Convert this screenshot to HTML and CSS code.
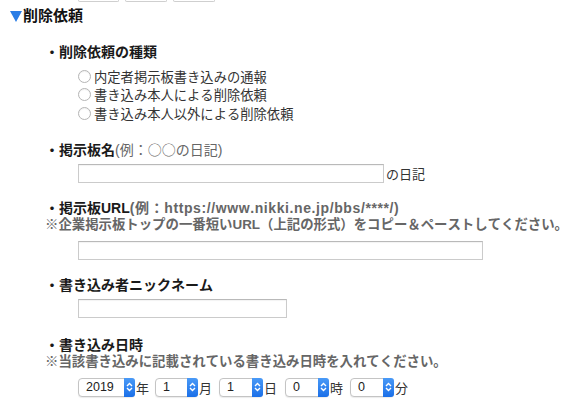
FILE: index.html
```html
<!DOCTYPE html>
<html lang="ja">
<head>
<meta charset="utf-8">
<link rel="stylesheet" href="styles.css">
</head>
<body>
<div class="tabs"><span class="tab t1"></span><span class="tab t2"></span><span class="tab t3"></span></div>
<h2 class="section-title"><svg class="tri" width="12" height="11" viewBox="0 0 12 11"><polygon points="0,0 12,0 6,11" fill="#2a7de6"/></svg>削除依頼</h2>
<ul class="form-list">
  <li class="item">
    <div class="label">・削除依頼の種類</div>
    <div class="radios">
      <label class="radio-row"><span class="radio"></span>内定者掲示板書き込みの通報</label>
      <label class="radio-row"><span class="radio"></span>書き込み本人による削除依頼</label>
      <label class="radio-row"><span class="radio"></span>書き込み本人以外による削除依頼</label>
    </div>
  </li>
  <li class="item">
    <div class="label">・掲示板名<span class="hint">(例：<span class="cjk">○○</span>の日記)</span></div>
    <div class="control"><span class="input w-name"></span><span class="suffix">の日記</span></div>
  </li>
  <li class="item">
    <div class="label">・掲示板URL<span class="hint b">(例：https://www.nikki.ne.jp/bbs/****/)</span></div>
    <div class="note">※企業掲示板トップの一番短いURL（上記の形式）をコピー＆ペーストしてください。</div>
    <div class="control"><span class="input w-url"></span></div>
  </li>
  <li class="item loose">
    <div class="label">・書き込み者ニックネーム</div>
    <div class="control"><span class="input w-nick"></span></div>
  </li>
  <li class="item">
    <div class="label">・書き込み日時</div>
    <div class="note">※当該書き込みに記載されている書き込み日時を入れてください。</div>
    <div class="control dates">
      <span class="sel w-year"><span class="val">2019</span><span class="step"><svg width="7" height="10" viewBox="0 0 7 10"><path d="M1 4 L3.5 1.5 L6 4 M1 6 L3.5 8.5 L6 6" fill="none" stroke="#fff" stroke-width="1.4"/></svg></span></span><span class="unit">年</span>
      <span class="sel w-month"><span class="val">1</span><span class="step"><svg width="7" height="10" viewBox="0 0 7 10"><path d="M1 4 L3.5 1.5 L6 4 M1 6 L3.5 8.5 L6 6" fill="none" stroke="#fff" stroke-width="1.4"/></svg></span></span><span class="unit">月</span>
      <span class="sel w-day"><span class="val">1</span><span class="step"><svg width="7" height="10" viewBox="0 0 7 10"><path d="M1 4 L3.5 1.5 L6 4 M1 6 L3.5 8.5 L6 6" fill="none" stroke="#fff" stroke-width="1.4"/></svg></span></span><span class="unit">日</span>
      <span class="sel w-hour"><span class="val">0</span><span class="step"><svg width="7" height="10" viewBox="0 0 7 10"><path d="M1 4 L3.5 1.5 L6 4 M1 6 L3.5 8.5 L6 6" fill="none" stroke="#fff" stroke-width="1.4"/></svg></span></span><span class="unit">時</span>
      <span class="sel w-min"><span class="val">0</span><span class="step"><svg width="7" height="10" viewBox="0 0 7 10"><path d="M1 4 L3.5 1.5 L6 4 M1 6 L3.5 8.5 L6 6" fill="none" stroke="#fff" stroke-width="1.4"/></svg></span></span><span class="unit">分</span>
    </div>
  </li>
</ul>
</body>
</html>
```
FILE: styles.css
```css
html, body {
  margin: 0;
  padding: 0;
  background: #fff;
}
body {
  font-family: "Liberation Sans", "Noto Sans CJK JP", sans-serif;
  font-kerning: none;
  color: #222;
  overflow: hidden;
}
.cjk {
  font-family: "Noto Sans CJK JP", sans-serif;
}
.tabs {
  display: flex;
  height: 2px;
  padding-left: 78px;
  gap: 6px;
}
.tab {
  display: block;
  height: 1px;
  border: 1px solid #cfcfcf;
  border-top: none;
  border-radius: 0 0 3px 3px;
}
.t1 { width: 39px; }
.t2 { width: 40px; }
.t3 { width: 40px; }
.section-title {
  margin: 4px 0 0 10px;
  font-size: 15px;
  line-height: 20px;
  font-weight: bold;
  display: flex;
  align-items: center;
  color: #111;
}
.tri {
  margin-right: 1px;
  margin-top: 1px;
}
.form-list {
  list-style: none;
  margin: 17px 0 0;
  padding: 0 0 0 45px;
}
.item {
  margin-bottom: 16px;
}
.item.loose {
  margin-bottom: 18px;
}
.label {
  font-size: 14px;
  line-height: 18px;
  font-weight: bold;
  color: #1a1a1a;
}
.hint {
  color: #666;
  font-weight: normal;
}
.hint.b {
  font-weight: bold;
  letter-spacing: 0.6px;
}
.note {
  font-size: 13.4px;
  line-height: 18px;
  font-weight: bold;
  color: #666;
  margin-top: -1px;
}
.radios {
  margin-top: 6px;
  padding-left: 33px;
  padding-bottom: 1px;
}
.radio-row {
  display: flex;
  align-items: center;
  height: 18.5px;
  font-size: 13.3px;
  color: #333;
}
.radio {
  width: 11px;
  height: 11px;
  border: 1px solid #b5b5b5;
  border-radius: 50%;
  background: #fff;
  margin-right: 3px;
  box-shadow: inset 0 1px 1px rgba(0,0,0,0.06);
}
.control {
  display: flex;
  align-items: center;
  margin-top: 5px;
  padding-left: 33px;
}
.item .note + .control {
  margin-top: 7px;
}
.input {
  display: block;
  height: 19px;
  box-sizing: border-box;
  border: 1px solid #cbcbcb;
  border-top-color: #b9b9b9;
  background: #fff;
  box-shadow: inset 0 1px 1px rgba(0,0,0,0.05);
}
.w-name { width: 306px; }
.w-url { width: 405px; }
.w-nick { width: 209px; }
.suffix {
  font-size: 13px;
  color: #333;
  margin-left: 2px;
}
.dates {
  gap: 0;
}
.sel {
  display: flex;
  align-items: stretch;
  height: 19px;
  box-sizing: border-box;
  border: 1px solid #c4c4c4;
  border-radius: 4px;
  background: #fff;
  box-shadow: 0 1px 1px rgba(0,0,0,0.08);
}
.val {
  flex: 1;
  font-size: 12.5px;
  line-height: 17px;
  color: #222;
  padding-left: 7px;
}
.step {
  width: 11px;
  background: linear-gradient(#4a9af7, #1a6fe8);
  border-radius: 0 3px 3px 0;
  display: flex;
  align-items: center;
  justify-content: center;
  margin: -1px -1px -1px 0;
}
.w-year { width: 57px; }
.w-month { width: 43px; margin-left: 6px; }
.w-day { width: 44px; margin-left: 7px; }
.w-hour { width: 44px; margin-left: 8px; }
.w-min { width: 44px; margin-left: 7px; }
.unit {
  font-size: 13px;
  color: #333;
  margin-left: 1px;
}
```
